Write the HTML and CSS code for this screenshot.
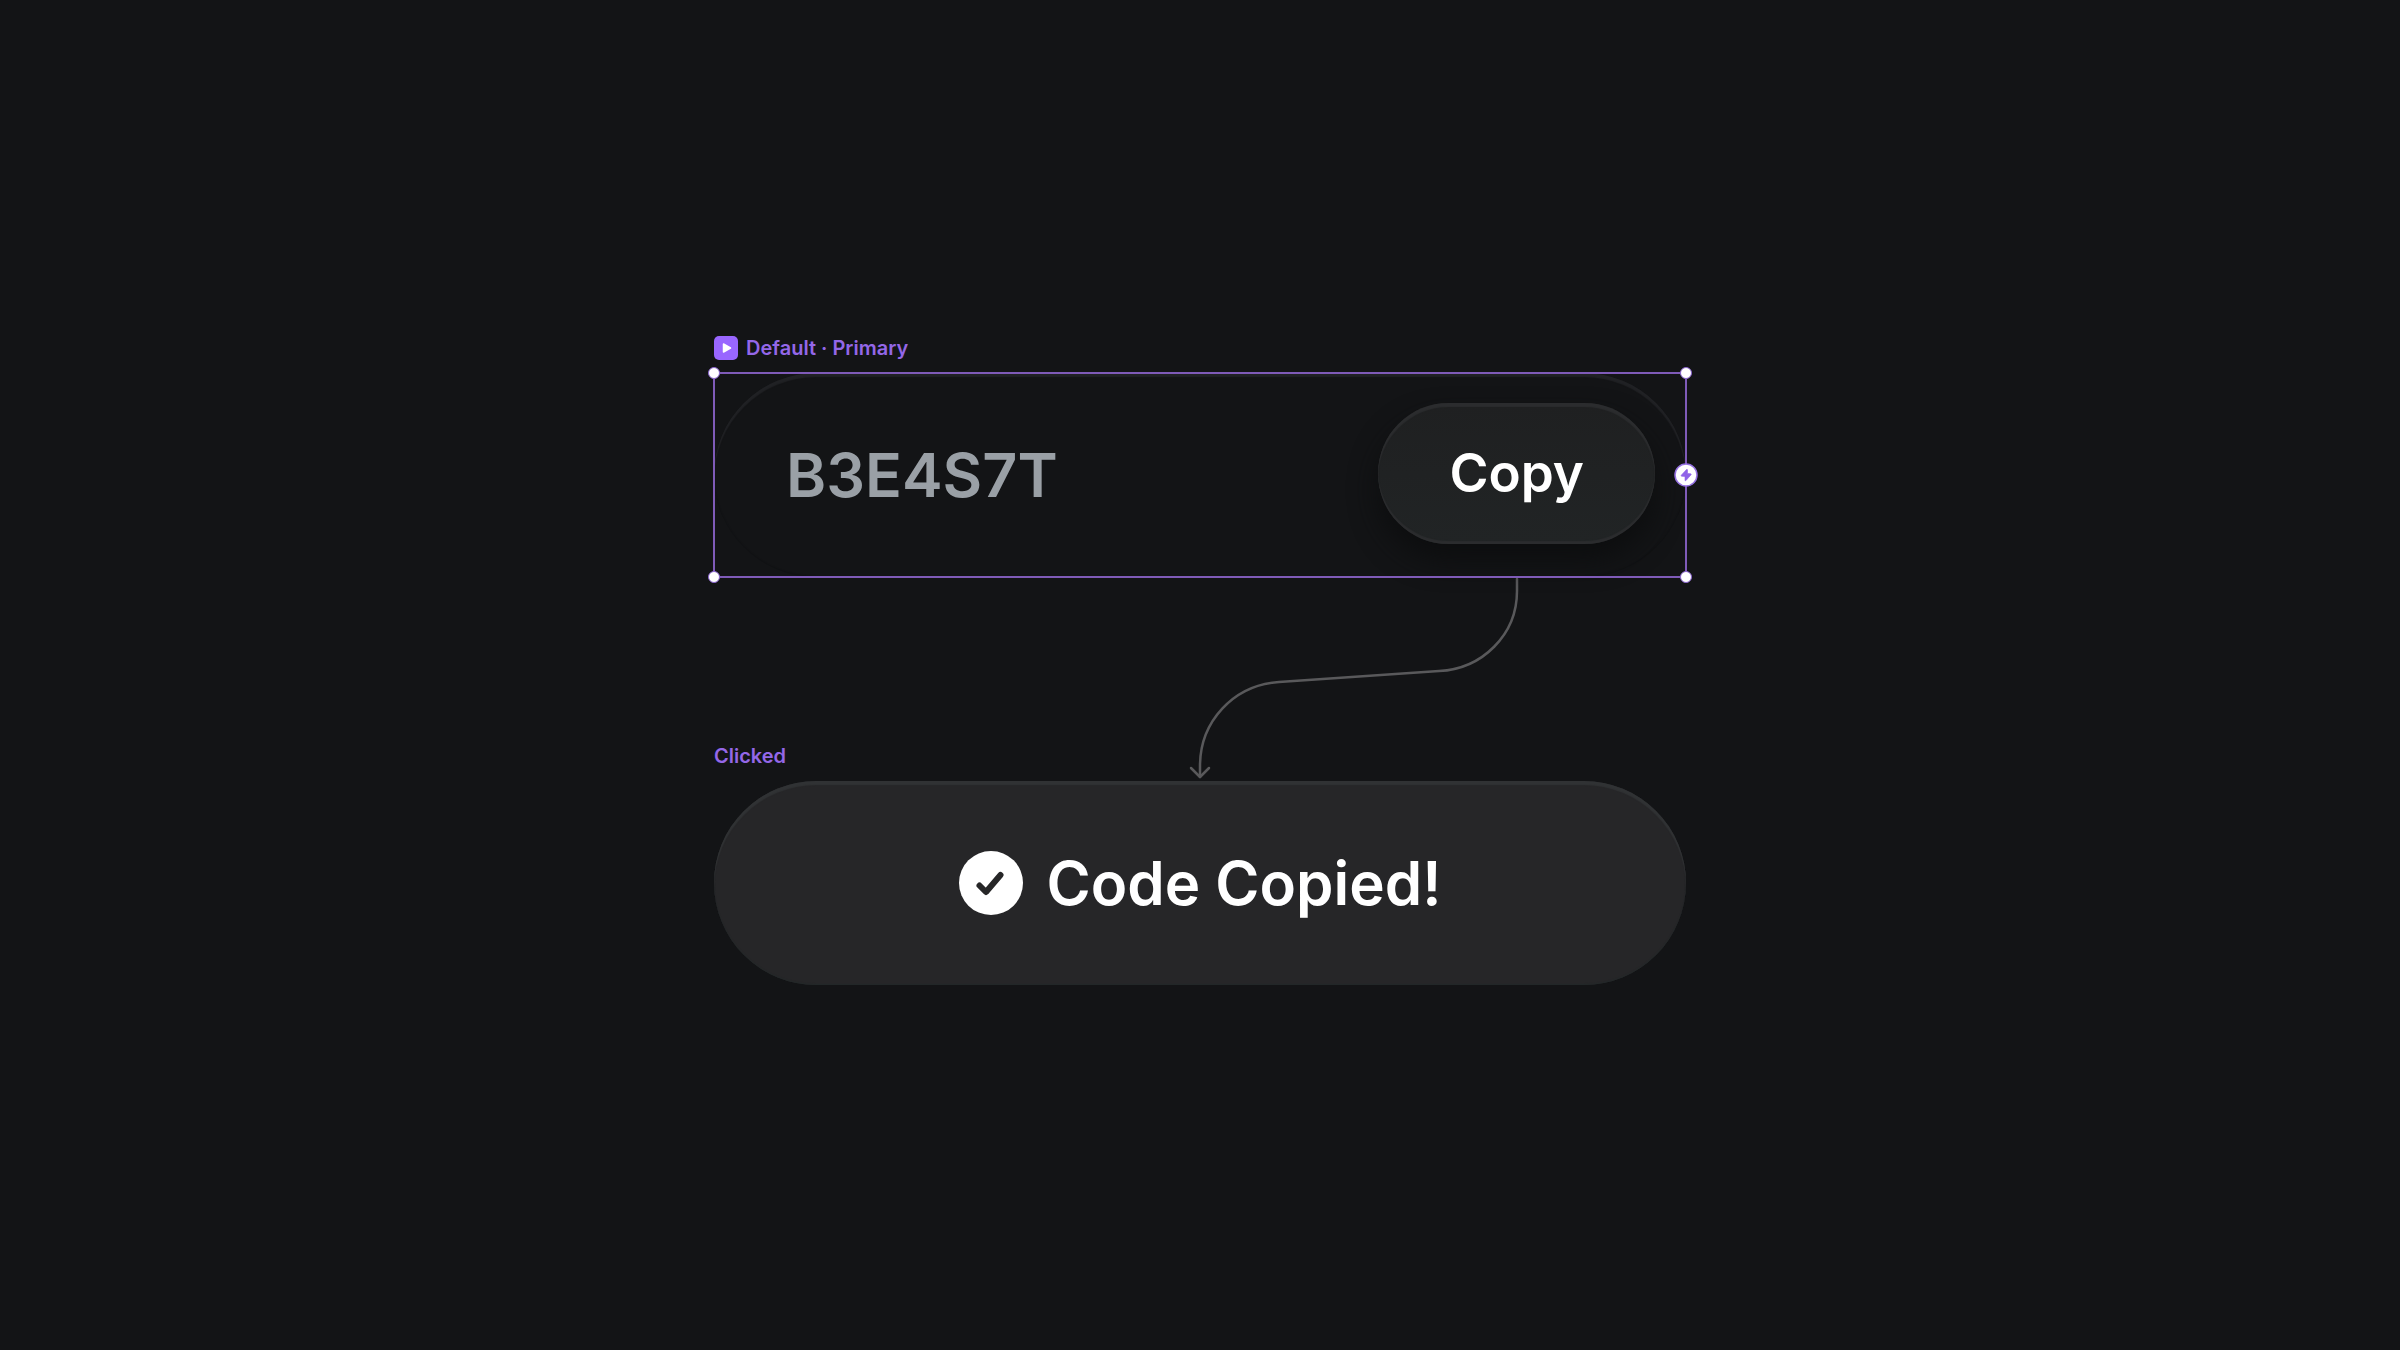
FILE: index.html
```html
<!DOCTYPE html>
<html lang="en">
<head>
<meta charset="utf-8">
<meta name="viewport" content="width=device-width, initial-scale=1">
<title>Copy code component</title>
<link rel="stylesheet" href="styles.css">
</head>
<body>
<main class="stage">
  <section class="variant">
    <h2 class="label">
      <svg class="label-icon" viewBox="0 0 24 24" aria-hidden="true"><rect width="24" height="24" rx="5" fill="#9966ff"/><path d="M9.500 8v8l7-4z" fill="#fff" stroke="#fff" stroke-width="1.500" stroke-linejoin="round"/></svg>
      <span>Default · Primary</span>
    </h2>
    <div class="selection">
      <div class="field">
        <span class="code">B3E4S7T</span>
        <button class="copy" type="button">Copy</button>
      </div>
      <span class="handle top left"></span>
      <span class="handle top right"></span>
      <span class="handle bottom left"></span>
      <span class="handle bottom right"></span>
      <svg class="trigger" viewBox="0 0 24 24" aria-hidden="true"><circle cx="12" cy="12" r="11" fill="#fff" stroke="#9470e0" stroke-width="1.500"/><path d="M12.500 6.500 7.200 12.300q-.4.700.4.900l3.400.3v3.800q.3.900 1 .2l5.100-5.800q.4-.8-.4-.9l-3.200-.4V6.800q-.3-.9-1-.3z" fill="#9063e8" stroke="#9063e8" stroke-width=".6" stroke-linejoin="round"/></svg>
    </div>
  </section>
  <div class="flow">
    <svg class="connector" viewBox="0 0 972 204" fill="none" stroke="#59595b" stroke-width="2.500" stroke-linecap="round" stroke-linejoin="round" aria-hidden="true">
      <path d="M803 2V14C803 58 768 92 725 94L565 105C519 108 486 145 486 189V200"/>
      <path d="M477 191 486 200 495 191"/>
    </svg>
    <h2 class="label">Clicked</h2>
  </div>
  <div class="toast" role="status">
    <svg class="check" viewBox="0 0 64 64" aria-hidden="true"><circle cx="32" cy="32" r="32" fill="#fff"/><path d="M20.500 34.500 27 41 41.500 24" fill="none" stroke="#262627" stroke-width="6" stroke-linecap="round" stroke-linejoin="round"/></svg>
    <span>Code Copied!</span>
  </div>
</main>
</body>
</html>
```
FILE: styles.css
```css
* {
  box-sizing: border-box;
}

body {
  margin: 0;
  min-height: 100vh;
  display: flex;
  justify-content: center;
  align-items: center;
  background: #131416;
  color: #fff;
  font-family: Inter, "Liberation Sans", sans-serif;
  font-weight: 600;
}

.stage {
  width: 100%;
  max-width: 972px;
  padding-bottom: 30px;
}

.label {
  display: flex;
  align-items: center;
  gap: 8px;
  margin: 0 0 13px;
  font-size: 20px;
  line-height: 24px;
  font-weight: 600;
  color: #9467e8;
}

.label-icon {
  width: 24px;
  height: 24px;
}

.selection {
  position: relative;
  outline: 2px solid #7f5bb8;
  outline-offset: -1px;
}

.field {
  display: flex;
  align-items: center;
  justify-content: space-between;
  padding: 0 31px 0 72px;
  border-radius: 102px;
  box-shadow: inset 0 4px 1px #202124, inset 0 -1px 1px #101113;
}

.code {
  font-size: 61px;
  line-height: 80px;
  color: #9aa0a6;
}

.copy {
  margin: 30px 0 33px;
  padding: 35px 71px;
  border: 0;
  border-radius: 71px;
  background: linear-gradient(#1f2021, #212425);
  box-shadow: inset 0 4px 1px #2b2c2e, inset 0 -3px 1px #2b2c2e, 0 16px 28px #0d0e0f;
  color: #fff;
  font: inherit;
  font-size: 53px;
  line-height: 71px;
}

.handle {
  position: absolute;
  width: 12px;
  height: 12px;
  border: 1px solid #8a63d0;
  border-radius: 50%;
  background: #fff;
}

.top {
  top: -6px;
}

.bottom {
  bottom: -6px;
}

.left {
  left: -6px;
}

.right {
  right: -6px;
}

.trigger {
  position: absolute;
  top: 50%;
  right: -12px;
  width: 24px;
  height: 24px;
  transform: translateY(-50%);
}

.flow {
  display: grid;
  align-items: end;
}

.flow > * {
  grid-area: 1 / 1;
}

.connector {
  display: block;
  width: 100%;
}

.toast {
  display: flex;
  align-items: center;
  justify-content: center;
  gap: 24px;
  padding: 62px 32px;
  border-radius: 102px;
  background: #262628;
  box-shadow: inset 0 4px 1px #303234, inset 0 -1px 1px #232829;
  font-size: 60px;
  line-height: 80px;
}

.check {
  width: 64px;
  height: 64px;
}
```
